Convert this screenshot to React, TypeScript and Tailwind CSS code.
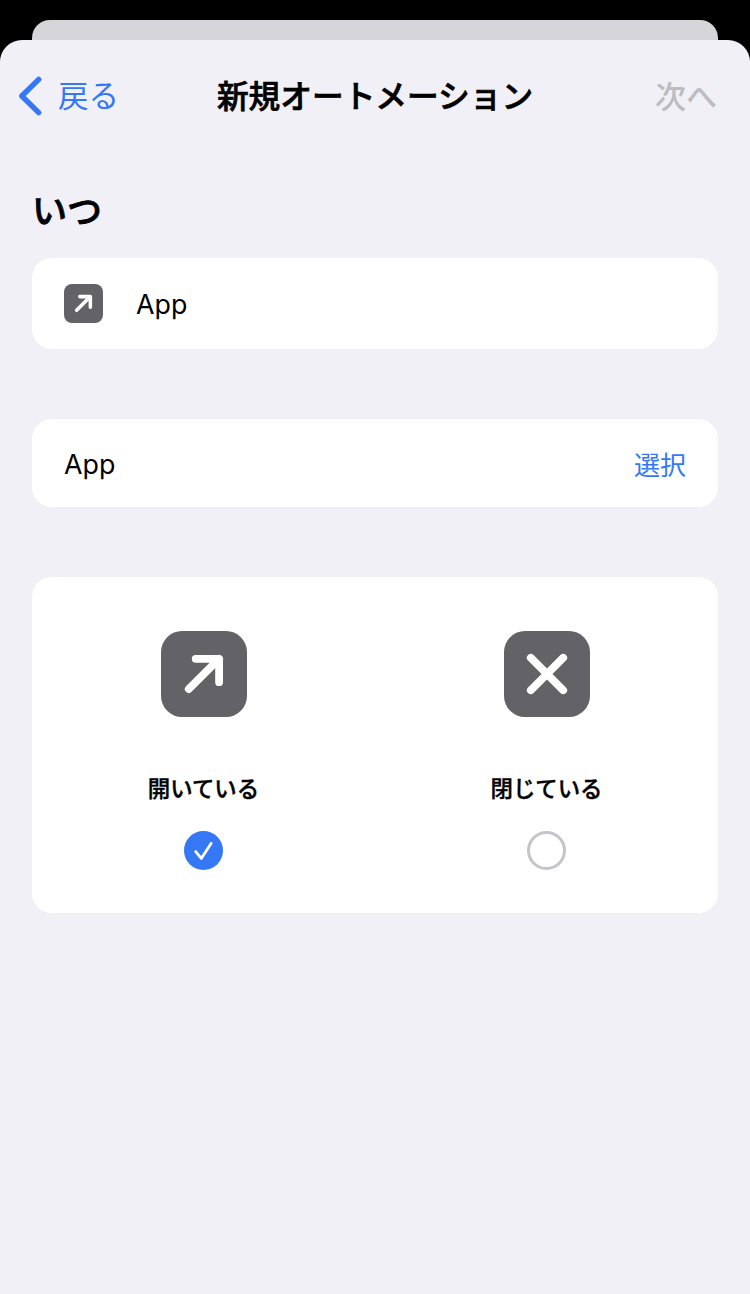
import { useState } from 'react';
import type { ReactNode } from 'react';

interface TileProps {
  className: string;
  children: ReactNode;
}

function Tile({ className, children }: TileProps) {
  return (
    <div className={`shrink-0 bg-[#636267] ${className}`}>
      <svg
        viewBox="0 0 86 86"
        className="block h-full w-full"
        fill="none"
        stroke="white"
        strokeWidth="7.8"
        strokeLinecap="round"
        strokeLinejoin="round"
      >
        {children}
      </svg>
    </div>
  );
}

function OpenArrow() {
  return <path d="M34.7 27.8H58.1V51.2M58.1 27.8L27.8 58.1" />;
}

function CloseCross() {
  return <path d="M26.8 26.8L59.2 59.2M59.2 26.8L26.8 59.2" />;
}

interface OptionProps {
  label: string;
  icon: ReactNode;
  selected: boolean;
  onSelect: () => void;
}

function Option({ label, icon, selected, onSelect }: OptionProps) {
  return (
    <button type="button" onClick={onSelect} className="flex flex-1 flex-col items-center pt-[54px]">
      <Tile className="h-[86px] w-[86px] rounded-[21px]">{icon}</Tile>
      <span className="mt-[56px] text-[22.4px] leading-8 font-medium [-webkit-text-stroke:0.4px_black]">{label}</span>
      {selected ? (
        <span className="mt-[26px] h-[39px] w-[39px] rounded-full bg-[#3478f6]">
          <svg
            viewBox="0 0 39 39"
            className="block h-full w-full"
            fill="none"
            stroke="white"
            strokeWidth="2.8"
            strokeLinecap="round"
            strokeLinejoin="round"
          >
            <path d="M11.7 20.6L17.3 27.4L27.2 12.3" />
          </svg>
        </span>
      ) : (
        <span className="mt-[26px] h-[39px] w-[39px] rounded-full border-3 border-[#c5c4ca]" />
      )}
    </button>
  );
}

export default function App() {
  const [trigger, setTrigger] = useState<'open' | 'close'>('open');

  return (
    <div className="min-h-[1294px] bg-black pt-5 font-['Inter','Noto_Sans_CJK_JP',sans-serif] text-black">
      <div className="mx-8 h-5 rounded-t-[18px] bg-[#d6d5da]" />
      <div className="min-h-[1254px] rounded-t-[22px] bg-[#f1f0f6]">
        <header className="grid h-28 grid-cols-[1fr_auto_1fr] items-center px-4">
          <button type="button" className="flex items-center text-[30.5px] leading-10 text-[#3478f6]">
            <svg
              viewBox="0 0 28 44"
              className="mr-[14px] h-11 w-7"
              fill="none"
              stroke="currentColor"
              strokeWidth="5.4"
              strokeLinecap="round"
              strokeLinejoin="round"
            >
              <path d="M22.7 5.4L5.8 22L22.7 38.6" />
            </svg>
            戻る
          </button>
          <h1 className="pt-0.5 text-[31.7px] leading-10 font-medium [-webkit-text-stroke:0.7px_black]">新規オートメーション</h1>
          <button type="button" disabled className="mr-[17px] justify-self-end pt-px text-[31px] leading-10 font-medium text-[#bdbcc1]">
            次へ
          </button>
        </header>

        <main className="px-8 pt-[37px]">
          <h2 className="text-[35px] leading-[44px] font-medium [-webkit-text-stroke:0.8px_black]">いつ</h2>

          <section className="mt-[25px] flex h-[91px] items-center rounded-[20px] bg-white px-8">
            <Tile className="h-[39px] w-[39px] rounded-[8px]">
              <OpenArrow />
            </Tile>
            <span className="ml-[33px] pt-0.5 text-[26.8px]">App</span>
          </section>

          <section className="mt-[70px] flex h-[88px] items-center justify-between rounded-[20px] bg-white px-8">
            <span className="pt-0.5 text-[26.8px]">App</span>
            <button type="button" className="pt-[5px] text-[26px] leading-9 text-[#3478f6]">選択</button>
          </section>

          <section className="mt-[70px] flex h-[336px] items-start rounded-[20px] bg-white">
            <Option
              label="開いている"
              icon={<OpenArrow />}
              selected={trigger === 'open'}
              onSelect={() => setTrigger('open')}
            />
            <Option
              label="閉じている"
              icon={<CloseCross />}
              selected={trigger === 'close'}
              onSelect={() => setTrigger('close')}
            />
          </section>
        </main>
      </div>
    </div>
  );
}
